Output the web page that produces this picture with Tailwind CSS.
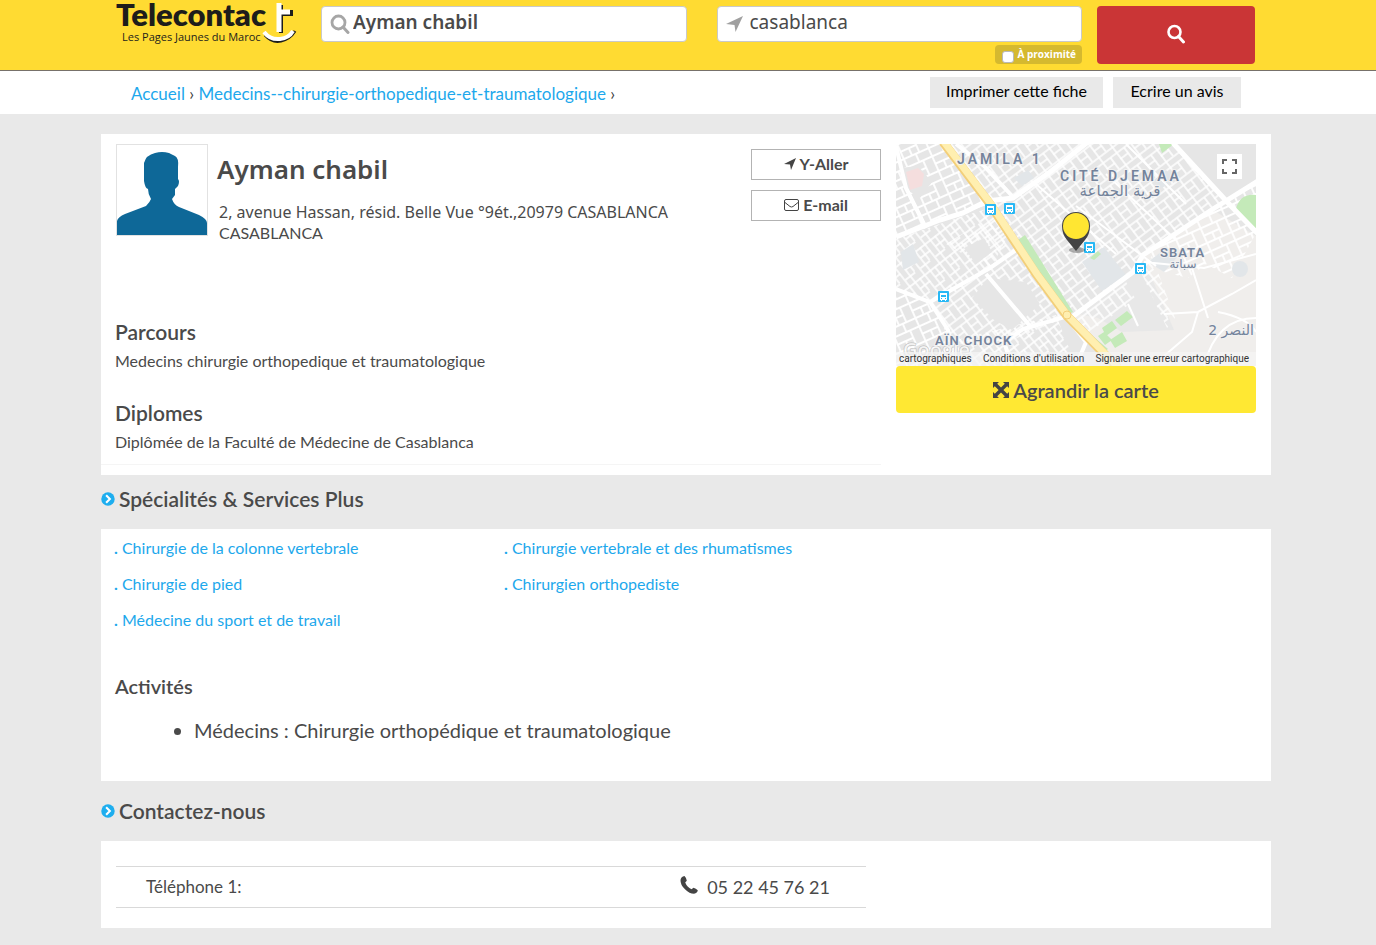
<!DOCTYPE html>
<html lang="fr">
<head>
<meta charset="utf-8">
<meta name="viewport" content="width=device-width, initial-scale=1">
<title>Ayman chabil - Telecontact</title>
<script src="https://cdn.jsdelivr.net/npm/@tailwindcss/browser@4"></script>
</head>
<body class="min-h-screen bg-[#e9e9e9] font-['Lato',sans-serif] text-[#4a4a4a]">

<header class="border-b border-[#77716a] bg-[#ffdb32] pr-1">
  <div class="mx-auto flex h-[70px] max-w-[1170px] items-start px-[15px]">
    <a href="#" aria-label="Telecontact, Les Pages Jaunes du Maroc" class="mr-[21px] block w-[184px] shrink-0">
      <svg class="h-12 w-[184px]" viewBox="0 0 184 48">
        <text x="0" y="26" class="fill-[#1d1d1b] font-['Lato'] text-[31px] font-extrabold">Telecontac</text>
        <text x="6" y="41" class="fill-[#1d1d1b] font-['Open_Sans'] text-[11px]">Les Pages Jaunes du Maroc</text>
        <path d="M149 35q7 8 16 6q9-2 14-10" fill="none" stroke="#1d1d1b" stroke-width="3"/>
        <path d="M165 5v28M165 14h10v-4" fill="none" stroke="#1d1d1b" stroke-width="4"/>
        <path d="M163 3v29M165 12h9" fill="none" stroke="#fff" stroke-width="5"/>
        <path d="M148 32q6 8 16 7q9-1 13-8" fill="none" stroke="#fff" stroke-width="4"/>
      </svg>
    </a>
    <form class="mr-px flex min-w-0 flex-1 items-start pt-[6px]">
      <div class="mr-[30px] min-w-0 flex-1">
        <label class="flex h-9 items-center rounded-[4px] border border-[#c9c9c9] bg-white pl-2">
          <svg class="h-5 w-5 shrink-0" viewBox="0 0 20 20" fill="none" stroke="#a6a6a6"><circle cx="8.500" cy="8.500" r="6.500" stroke-width="2.800"/><path d="M13 13l5 5.500" stroke-width="3" stroke-linecap="round"/></svg>
          <input type="text" aria-label="Quoi, qui" value="Ayman chabil" class="h-8 w-full min-w-0 bg-transparent pb-1 pl-[3px] font-['Noto_Sans',sans-serif] text-[19px] font-semibold outline-none">
        </label>
      </div>
      <div class="mr-[15px] flex min-w-0 flex-1 flex-col items-end">
        <label class="flex h-9 w-full items-center rounded-[4px] border border-[#c9c9c9] bg-white pl-2">
          <svg class="h-[18px] w-[18px] shrink-0" viewBox="0 0 18 18"><path d="M17 1L9.500 17L8.500 10L0 9z" fill="#a0a0a0"/></svg>
          <input type="text" aria-label="Où" value="casablanca" class="h-8 w-full min-w-0 bg-transparent pb-1 pl-[6px] font-['Noto_Sans',sans-serif] text-[19px] outline-none">
        </label>
        <label class="mt-[3px] flex h-[19px] items-center gap-[3px] rounded-[4px] bg-[#d5b92f] pr-[6px] pl-[7px] font-['Open_Sans',sans-serif] text-[10px] font-bold text-white">
          <input type="checkbox" class="mt-1 h-3 w-3 appearance-none rounded-[3px] border border-[#b9b9b9] bg-white">À proximité
        </label>
      </div>
      <button type="submit" aria-label="Rechercher" class="flex h-[58px] w-[158px] shrink-0 items-center justify-center rounded-[4px] bg-[#ca3536] pb-[3px]">
        <svg class="h-5 w-5" viewBox="0 0 20 20" fill="none" stroke="#fff"><circle cx="8.500" cy="8" r="6" stroke-width="2.600"/><path d="M12.500 12.500l5 5.500" stroke-width="3" stroke-linecap="round"/></svg>
      </button>
    </form>
  </div>
</header>

<div class="bg-white pr-1">
  <div class="mx-auto flex h-[43px] max-w-[1170px] items-start justify-between px-[30px] pt-[6px]">
    <nav aria-label="Fil d'Ariane" class="pt-[5px] text-[17px] leading-6 text-[#3f3f3f]">
      <a href="#" class="text-[#1da8ec]">Accueil</a> › <a href="#" class="text-[#1da8ec]">Medecins--chirurgie-orthopedique-et-traumatologique</a> ›
    </nav>
    <div class="flex gap-[10px] text-[16px] text-black">
      <button type="button" class="h-[31px] w-[173px] bg-[#e9e9e9] pb-[3px]">Imprimer cette fiche</button>
      <button type="button" class="h-[31px] w-[128px] bg-[#e9e9e9] pb-[3px]">Ecrire un avis</button>
    </div>
  </div>
</div>

<main class="pt-5 pr-1 pb-[17px]">
  <div class="mx-auto max-w-[1170px]">

    <section class="flex items-start bg-white pt-[10px] pr-[15px] pb-[10px]">
      <div class="mr-[15px] min-w-0 flex-1 border-b border-[#f5f5f5]">
        <div class="flex h-[178px] pl-[15px]">
          <svg class="h-[92px] w-[92px] shrink-0 border border-[#e2e2e2]" viewBox="0 0 90 90" role="img" aria-label="Photo"><path fill="#0e6898" d="M0 90V76Q1 72 8 69L29 61Q33 57 34 54Q31 49 31 44Q28 43 27 36V18Q29 10 38 8Q45 6 52 8L58 11Q62 13 61 22V34Q63 36 61 41L58 44V50L55 54Q57 60 62 62L82 70Q90 74 90 78V90z"/></svg>
          <div class="min-w-0 flex-1 pl-[9px]">
            <h1 class="pt-1 font-['Noto_Sans',sans-serif] text-[26px] leading-[42px] font-semibold">Ayman chabil</h1>
            <p class="pt-[11px] pl-[2px] font-['Noto_Sans',sans-serif] text-[16px] leading-[22px]">2, avenue Hassan, résid. Belle Vue °9ét.,20979 CASABLANCA</p>
            <p class="pl-[2px] text-[16px] leading-5">CASABLANCA</p>
          </div>
          <div class="flex w-[130px] shrink-0 flex-col gap-[10px] pt-[5px]">
            <button type="button" class="flex h-[31px] items-center justify-center gap-1 border border-[#b3b3b3] pb-[2px] text-[16px] font-bold">
              <svg class="h-3 w-3" viewBox="0 0 12 12"><path d="M12 0L7 12L6 6.500L0 6z" fill="#444"/></svg>Y-Aller
            </button>
            <button type="button" class="flex h-[31px] items-center justify-center gap-1 border border-[#b3b3b3] pb-[2px] text-[16px] font-bold">
              <svg class="h-3 w-[15px]" viewBox="0 0 15 12" fill="none" stroke="#444"><rect x=".5" y=".5" width="14" height="11" rx="1.500"/><path d="M1 3.500l5 4q1.500 1 3 0l5-4"/></svg>E-mail
            </button>
          </div>
        </div>
        <div class="pl-[14px]">
          <h2 class="h-7 text-[21px] leading-5 font-semibold">Parcours</h2>
          <p class="h-[53px] text-[16px] leading-[22px]">Medecins chirurgie orthopedique et traumatologique</p>
          <h2 class="h-7 text-[21px] leading-5 font-semibold">Diplomes</h2>
          <p class="h-[33px] text-[16px] leading-[22px]">Diplômée de la Faculté de Médecine de Casablanca</p>
        </div>
      </div>

      <div class="w-[360px] shrink-0">
        <div class="relative h-[222px] overflow-hidden bg-[#e8e8e8]">
          <svg class="block h-[222px] w-[360px]" viewBox="0 0 360 222" role="img" aria-label="Plan du quartier">
            <defs>
              <pattern id="fine" width="17" height="22" patternUnits="userSpaceOnUse" patternTransform="rotate(-37)"><path d="M0 1h17M0 8h17M0 15h10M1 0v22M10 8v14" stroke="#fff" stroke-width="1.600" fill="none"/></pattern>
              <pattern id="mid" width="27" height="25" patternUnits="userSpaceOnUse" patternTransform="rotate(-24)"><path d="M0 1h27M0 9h18M0 17h27M1 0v25M10 9v8M18 0v17M14 17v8" stroke="#fff" stroke-width="1.800" fill="none"/></pattern>
              <pattern id="steep" width="24" height="19" patternUnits="userSpaceOnUse" patternTransform="rotate(52)"><path d="M0 1h24M0 7h16M0 13h24M1 0v19M9 0v13M17 7v12" stroke="#fff" stroke-width="1.600" fill="none"/></pattern>
            </defs>
            <path fill="#e6e6e6" d="M0 0h360v222H0z"/>
            <path fill="url(#mid)" d="M0 0H47L94 60 67 69 0 92z"/>
            <path fill="url(#steep)" d="M0 95L67 72 94 64 112 92 94 126 34 158 0 146z"/>
            <path fill="url(#fine)" d="M50 100l48-30 42 62 28 42-56 24-56 2-22-42 60-32z"/>
            <path fill="url(#mid)" d="M0 146l34 12 24 42v22H0z"/>
            <path fill="url(#steep)" d="M60 196l100-25 20 51H60z"/>
            <path fill="#e6e6e6" d="M92 134l38 4 14 22-28 26-18-10-22-22z"/>
            <path fill="#e6e6e6" d="M4 24l18-2 14 16-12 16-16-10zM68 104l20-10 8 14-16 12z"/>
            <path fill="url(#fine)" d="M50 0h227l58 62-18 3-144 108L96 56z"/>
            <path fill="#f0eeec" d="M174 176l63-48 10-15 70-47 43 26v130H218z"/>
            <path fill="url(#mid)" d="M318 66l42-27v50l-24 45-26-14-18 14-24-6-22-16z"/>
            <path fill="#e6e6e6" d="M281 0h79v36l-26 22z"/>
            <path fill="#e8e8e8" d="M182 170l50-40 16-14 30 70-52 2-24-14z"/>
            <path fill="url(#fine)" d="M176 172l52-38 12 22-30 20-22 16z"/>
            <path fill="url(#steep)" d="M242 122l14-10 23 62-8 10z"/>
            <path fill="#e2e6e9" d="M186 118l22-15 22 28-24 16zM118 34l14-8 6 8-12 8zM258 36l12-10 8 10-12 8zM5 108l12-8 6 18-16 8zM270 104l14 6-16 18-16-10z"/>
            <circle cx="344" cy="125" r="8" fill="#e2e6e9"/>
            <path fill="#f5dede" d="M10 28l12-4 6 6-2 12-12 4z"/>
            <path fill="#c4eab9" d="M122 96l7-5 48 77-7 3-28-36zM178 176l34 29-5 3-32-26zM263 0h15l-12 9zM340 65q4-16 20-14v40zM206 184l10-7 5 7-11 8zM219 176l12-9 6 6-12 9zM214 196l12-8 5 9-12 7zM202 192l6-4 8 8-7 5zM194 114l8-7 3 3-7 6z"/>
            <g fill="none" stroke="#fff">
              <path stroke-width="5" d="M0 93L44 76 67 69 91 57 117 54 154 28 192-2M172 176L237 128 247 111 317 65 362 37M277-1L334 61 362 90"/>
              <path stroke-width="4" d="M0 2L10 44 20 64 30 84M0 145L34 158 94 124 126 102M34 158L52 186 62 222M172 172L127 185 108 198 116 222M90 130L134 182M60 0L88 22 118 54M176 180l14 18-10 24"/>
              <path stroke-width="2" d="M268 170l34-2 34-18 24-14M302 168l-6 20-28 24M360 174q-40 0-52 48M322 168q30 6 38 20M248 118l60 6 52-14M296 124l16 50M232 160l10 22M180 62l80 60M210 30l70 66M230 0l60 60M140 40l80 70"/>
            </g>
            <path d="M47-2L94 60 107 80 140 130 171 172 222 224" fill="none" stroke="#f3cf7a" stroke-width="9"/>
            <path d="M48-2L95 60 108 80 141 130 172 172 223 224" fill="none" stroke="#ffefb0" stroke-width="7"/>
            <circle cx="171" cy="171" r="4" fill="#ffefb0" stroke="#f3cf7a"/>
            <text x="7" y="213" class="fill-white/70 font-['Open_Sans',sans-serif] text-[20px] font-semibold" stroke="#bbb" stroke-width="1" paint-order="stroke">Google</text>
            <g fill="#74839b" stroke="#f1f1f1" stroke-width="2" paint-order="stroke" class="font-['Roboto',sans-serif] font-semibold">
              <text x="61" y="20" class="text-[14px] tracking-[3px]">JAMILA 1</text>
              <text x="164" y="37" class="text-[14px] tracking-[3px]">CITÉ DJEMAA</text>
              <text x="264" y="113" class="text-[13px] tracking-[1px]">SBATA</text>
              <text x="39" y="201" class="text-[13px] tracking-[1px]">AÏN CHOCK</text>
              <g class="font-['DejaVu_Sans',sans-serif] font-normal">
                <text x="224" y="52" text-anchor="middle" class="text-[15px]">قرية الجماعة</text>
                <text x="287" y="124" text-anchor="middle" class="text-[12px]">سباتة</text>
                <text x="335" y="191" text-anchor="middle" class="text-[14px]">النصر 2</text>
              </g>
            </g>
            <g>
              <g transform="translate(89 60)"><rect width="11" height="11" rx="1" fill="#28b8f5"/><path d="M2 2h7v7H8v1H7V9H4v1H3V9H2z" fill="#fff"/><path d="M3 4h5v2H3zM3 7h1v1H3zM7 7h1v1H7z" fill="#28b8f5"/></g>
              <g transform="translate(108 59)"><rect width="11" height="11" rx="1" fill="#28b8f5"/><path d="M2 2h7v7H8v1H7V9H4v1H3V9H2z" fill="#fff"/><path d="M3 4h5v2H3zM3 7h1v1H3zM7 7h1v1H7z" fill="#28b8f5"/></g>
              <g transform="translate(188 98)"><rect width="11" height="11" rx="1" fill="#28b8f5"/><path d="M2 2h7v7H8v1H7V9H4v1H3V9H2z" fill="#fff"/><path d="M3 4h5v2H3zM3 7h1v1H3zM7 7h1v1H7z" fill="#28b8f5"/></g>
              <g transform="translate(239 119)"><rect width="11" height="11" rx="1" fill="#28b8f5"/><path d="M2 2h7v7H8v1H7V9H4v1H3V9H2z" fill="#fff"/><path d="M3 4h5v2H3zM3 7h1v1H3zM7 7h1v1H7z" fill="#28b8f5"/></g>
              <g transform="translate(42 147)"><rect width="11" height="11" rx="1" fill="#28b8f5"/><path d="M2 2h7v7H8v1H7V9H4v1H3V9H2z" fill="#fff"/><path d="M3 4h5v2H3zM3 7h1v1H3zM7 7h1v1H7z" fill="#28b8f5"/></g>
            </g>
            <ellipse cx="181" cy="106" rx="8" ry="3" fill="#000" opacity=".3"/>
            <path d="M166 82a14 14 0 0 1 28 0q0 8-5 14l-9 11-9-11q-5-6-5-14z" fill="#444"/>
            <circle cx="180" cy="82" r="13" fill="#ffe632"/>
          </svg>
          <button type="button" aria-label="Plein écran" class="absolute top-[10px] right-[14px] flex h-[25px] w-[25px] items-center justify-center bg-white">
            <svg class="h-[15px] w-[15px]" viewBox="0 0 15 15" fill="none" stroke="#666" stroke-width="2"><path d="M1 5V1h4M10 1h4v4M14 10v4h-4M5 14H1v-4"/></svg>
          </button>
          <div class="absolute right-0 bottom-0 left-0 flex h-[14px] items-center justify-between bg-[#f5f5f5]/70 pr-[7px] pb-[2px] pl-[3px] font-['Roboto',sans-serif] text-[10px] whitespace-nowrap text-[#333]">
            <span>cartographiques</span><a href="#">Conditions d'utilisation</a><a href="#">Signaler une erreur cartographique</a>
          </div>
        </div>
        <button type="button" class="flex h-[47px] w-full items-center justify-center gap-1 rounded-[4px] bg-[#ffe833] text-[20px] font-semibold">
          <svg class="h-4 w-4" viewBox="0 0 16 16"><path d="M0 0h6L4.200 1.800 8 5.600 11.800 1.800 10 0h6v6l-1.800-1.800L10.400 8l3.800 3.800L16 10v6h-6l1.800-1.800L8 10.400l-3.800 3.800L6 16H0v-6l1.800 1.800L5.600 8 1.800 4.200 0 6z" fill="#444"/></svg>Agrandir la carte
        </button>
      </div>
    </section>

    <h2 class="flex h-[54px] items-center gap-1 pb-[6px] text-[21px] font-semibold">
      <svg class="h-[14px] w-[14px]" viewBox="0 0 15 15"><circle cx="7.500" cy="7.500" r="7.200" fill="#1eaeef"/><path d="M5.500 3.500l4 4-4 4" fill="none" stroke="#fff" stroke-width="2.200"/></svg>Spécialités &amp; Services Plus
    </h2>
    <section class="bg-white px-[13px] pt-px pb-[36px]">
      <ul class="grid grid-cols-[390px_1fr] text-[16px] leading-9 text-[#1da8ec]">
        <li><b>.</b> <a href="#">Chirurgie de la colonne vertebrale</a></li>
        <li><b>.</b> <a href="#">Chirurgie vertebrale et des rhumatismes</a></li>
        <li><b>.</b> <a href="#">Chirurgie de pied</a></li>
        <li><b>.</b> <a href="#">Chirurgien orthopediste</a></li>
        <li><b>.</b> <a href="#">Médecine du sport et de travail</a></li>
      </ul>
      <h3 class="pt-[34px] pl-px text-[20px] leading-[28px] font-semibold">Activités</h3>
      <ul class="list-disc pt-[15px] pl-[80px] text-[20px] leading-[30px]">
        <li>Médecins : Chirurgie orthopédique et traumatologique</li>
      </ul>
    </section>

    <h2 class="flex h-[60px] items-center gap-1 text-[21px] font-semibold">
      <svg class="h-[14px] w-[14px]" viewBox="0 0 15 15"><circle cx="7.500" cy="7.500" r="7.200" fill="#1eaeef"/><path d="M5.500 3.500l4 4-4 4" fill="none" stroke="#fff" stroke-width="2.200"/></svg>Contactez-nous
    </h2>
    <section class="bg-white px-[15px] pt-[25px] pb-5">
      <dl class="flex h-[42px] max-w-[750px] items-center justify-between border-y border-[#d9d9d9] pr-9 pl-[30px]">
        <dt class="text-[17px]">Téléphone 1:</dt>
        <dd class="flex items-center gap-[9px] text-[18px]">
          <svg class="mb-1 h-[18px] w-[18px]" viewBox="0 0 18 18"><path d="M4.500 0Q1 .5.500 4Q.3 9 5 13.200Q9.500 17.800 14 17.800Q17.500 17 17.800 14.200Q16 12.300 13.500 11.700L11.500 13.300Q7 11 5.200 6.500L6.800 4.800Q6.300 1.600 4.500 0z" fill="#444"/></svg>05 22 45 76 21
        </dd>
      </dl>
    </section>
  </div>
</main>
</body>
</html>
